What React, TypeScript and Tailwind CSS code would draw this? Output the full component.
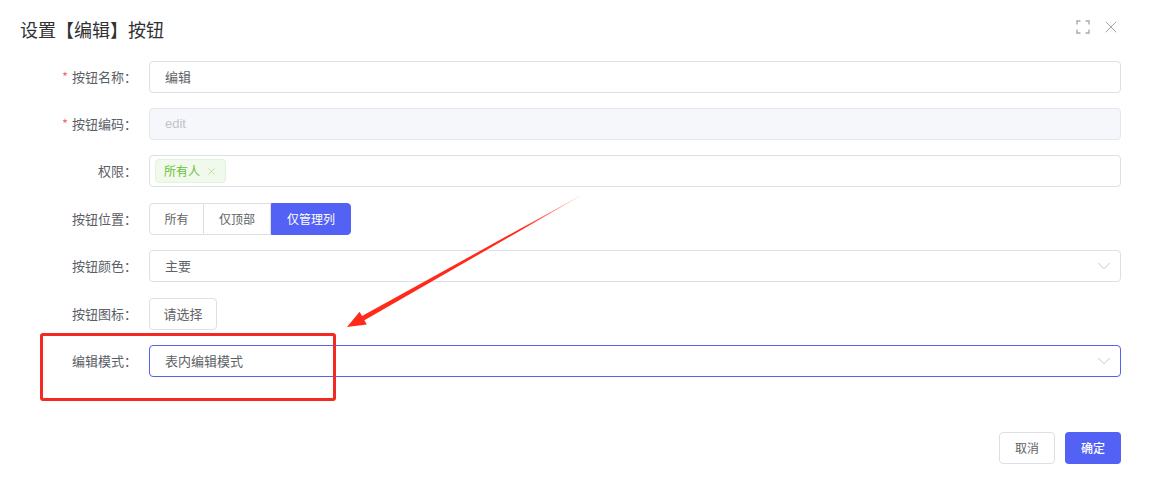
import { ChevronDown, X } from 'lucide-react'

const font = "font-['Noto_Sans_CJK_SC','Noto_Sans',sans-serif]"

function Label({ text, required }: { text: string; required?: boolean }) {
  return (
    <div className="flex h-8 w-[149px] shrink-0 items-center justify-end pr-3 text-[13px] text-[#5a5e66]">
      {required && <span className="mr-1 text-[#f56c6c]">*</span>}
      {text}：
    </div>
  )
}

function Row({
  label,
  required,
  className = '',
  children,
}: {
  label: string
  required?: boolean
  className?: string
  children: React.ReactNode
}) {
  return (
    <div className={`flex h-8 items-center ${className}`}>
      <Label text={label} required={required} />
      <div className="flex h-8 flex-1 items-center">{children}</div>
    </div>
  )
}

function FullscreenIcon() {
  return (
    <svg width="14" height="14" viewBox="0 0 14 14" fill="none" stroke="#a8abb2" strokeWidth="1.4">
      <path d="M1 4.5V1h3.5M9.5 1H13v3.5M13 9.5V13H9.5M4.5 13H1V9.5" />
    </svg>
  )
}

function Arrow() {
  // red annotation arrow, thin at the tail, thick near the head
  return (
    <svg className="pointer-events-none absolute left-0 top-0" width="1149" height="479">
      <defs>
        <linearGradient id="fade" x1="580" y1="196" x2="347" y2="327" gradientUnits="userSpaceOnUse">
          <stop offset="0" stopColor="#ff2a1a" stopOpacity="0.15" />
          <stop offset="0.25" stopColor="#ff2a1a" stopOpacity="1" />
          <stop offset="1" stopColor="#ff2a1a" />
        </linearGradient>
      </defs>
      <polygon
        points="580,195.7 580,196.3 364.4,320.2 366.8,324.6 347,327 359.6,311.7 362,316.1"
        fill="url(#fade)"
      />
    </svg>
  )
}

export default function App() {
  return (
    <div className={`relative flex h-[479px] w-[1149px] flex-col bg-white ${font}`}>
      <div className="flex h-[61px] items-start justify-between pl-5 pr-[28px] pt-4">
        <span className="text-[18px] leading-[26px] text-[#303133]">设置【编辑】按钮</span>
        <div className="mt-px flex items-center gap-[11px]">
          <FullscreenIcon />
          <X size={20} strokeWidth={1} className="text-[#909399]" />
        </div>
      </div>

      <div className="flex flex-col gap-[15px] pr-[28px]">
        <Row label="按钮名称" required>
          <div className="flex h-8 w-full items-center rounded border border-[#dcdfe6] px-[15px] text-[13px] text-[#606266]">
            编辑
          </div>
        </Row>
        <Row label="按钮编码" required>
          <div className="flex h-8 w-full items-center rounded border border-[#e4e7ed] bg-[#f5f7fa] px-[15px] font-['Liberation_Sans',sans-serif] text-[13px] text-[#c0c4cc]">
            edit
          </div>
        </Row>
        <Row label="权限">
          <div className="flex h-8 w-full items-center rounded border border-[#dcdfe6] px-[5px]">
            <span className="flex h-6 items-center gap-[6px] rounded border border-[#e1f3d8] bg-[#f0f9eb] px-2 text-[12px] text-[#67c23a]">
              所有人
              <X size={11} strokeWidth={1.6} className="text-[#a4d88c]" />
            </span>
          </div>
        </Row>
        <Row label="按钮位置" className="mt-px">
          <div className="flex h-8 text-[12px]">
            <button className="w-[55px] rounded-l border border-[#dcdfe6] text-[#606266]">所有</button>
            <button className="w-[67px] border border-l-0 border-[#dcdfe6] text-[#606266]">仅顶部</button>
            <button className="w-[80px] rounded-r border border-[#5461f5] bg-[#5461f5] text-white">仅管理列</button>
          </div>
        </Row>
        <Row label="按钮颜色">
          <div className="flex h-8 w-full items-center justify-between rounded border border-[#dcdfe6] pl-[15px] pr-[5px] text-[13px] text-[#606266]">
            主要
            <ChevronDown size={22} strokeWidth={0.9} className="text-[#b8bcc4]" />
          </div>
        </Row>
        <Row label="按钮图标" className="mt-px">
          <button className="h-8 w-[68px] rounded border border-[#dcdfe6] text-[13px] text-[#606266]">请选择</button>
        </Row>
        <Row label="编辑模式">
          <div className="flex h-8 w-full items-center justify-between rounded border border-[#5461f5] pl-[15px] pr-[5px] text-[13px] text-[#606266]">
            表内编辑模式
            <ChevronDown size={22} strokeWidth={0.9} className="text-[#b8bcc4]" />
          </div>
        </Row>
      </div>

      <div className="mt-[55px] flex justify-end gap-[10px] pr-[28px]">
        <button className="h-8 w-[56px] rounded border border-[#dcdfe6] text-[12px] text-[#606266]">取消</button>
        <button className="h-8 w-[56px] rounded bg-[#5461f5] text-[12px] font-medium text-white">确定</button>
      </div>

      <div className="pointer-events-none absolute left-[40px] top-[333px] h-[68px] w-[296px] rounded-[3px] border-[3px] border-[#f22a22]" />
      <Arrow />
    </div>
  )
}
